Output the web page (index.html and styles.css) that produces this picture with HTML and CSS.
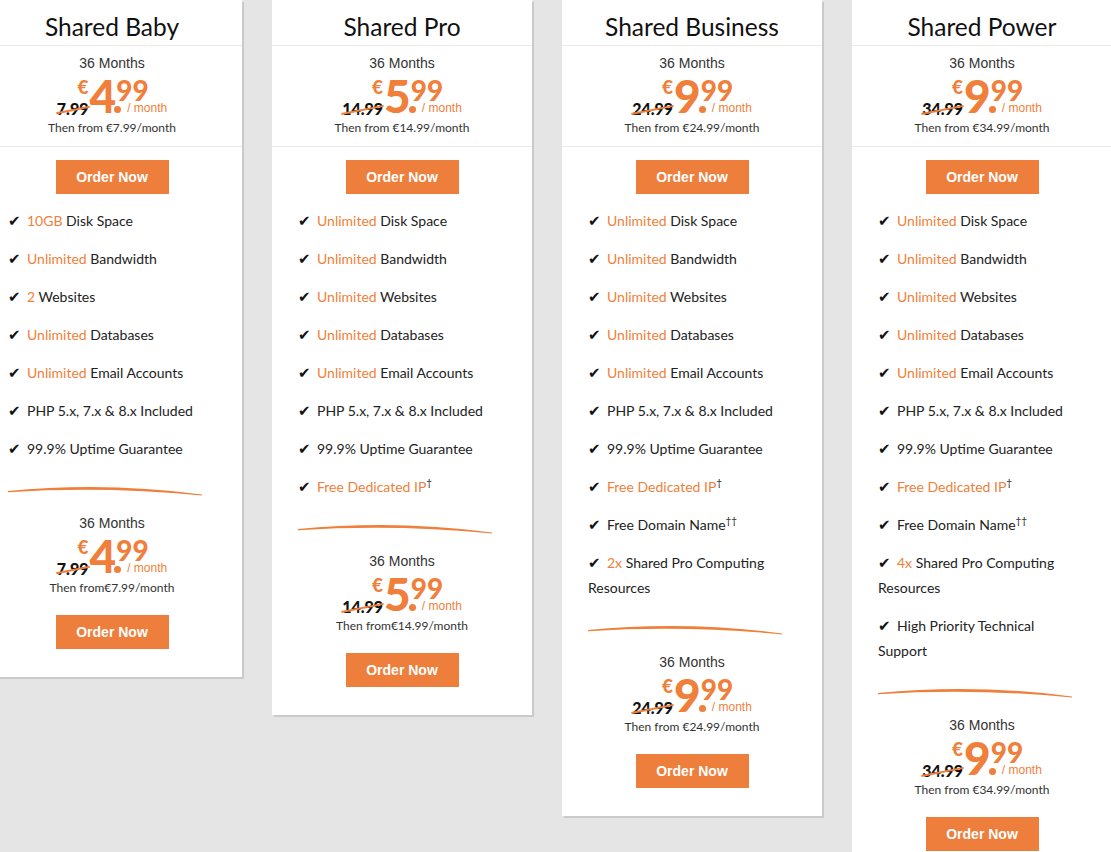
FILE: index.html
```html
<!DOCTYPE html>
<html lang="en">
<head>
    <meta charset="UTF-8">
    <meta name="viewport" content="width=device-width, initial-scale=1.0">
    <title>Shared Hosting Plans</title>
    <link rel="stylesheet" href="styles.css">
</head>
<body>
    <div class="plans">

        <div class="plan">
            <h2>Shared Baby</h2>
            <div class="price-box top">
                <div class="term">36 Months</div>
                <div class="price">
                    <div class="left"><span class="cur">€</span><span class="old">7.99</span></div>
                    <span class="int">4</span>
                    <div class="right"><span class="cents">99</span><div class="per"><span class="dot"></span>/ month</div></div>
                </div>
                <div class="then">Then from €7.99/month</div>
            </div>
            <a class="order" href="#">Order Now</a>
            <ul class="features">
                <li><span class="tick">✔</span><em>10GB</em> Disk Space</li>
                <li><span class="tick">✔</span><em>Unlimited</em> Bandwidth</li>
                <li><span class="tick">✔</span><em>2</em> Websites</li>
                <li><span class="tick">✔</span><em>Unlimited</em> Databases</li>
                <li><span class="tick">✔</span><em>Unlimited</em> Email Accounts</li>
                <li><span class="tick">✔</span>PHP 5.x, 7.x &amp; 8.x Included</li>
                <li><span class="tick">✔</span>99.9% Uptime Guarantee</li>
            </ul>
            <svg class="swoosh" viewBox="0 0 194 12" preserveAspectRatio="none"><path d="M0 5 Q97 -4.5 194 8.5 L194 9.5 Q97 0 0 6.2 Z"/></svg>
            <div class="price-box bottom">
                <div class="term">36 Months</div>
                <div class="price">
                    <div class="left"><span class="cur">€</span><span class="old">7.99</span></div>
                    <span class="int">4</span>
                    <div class="right"><span class="cents">99</span><div class="per"><span class="dot"></span>/ month</div></div>
                </div>
                <div class="then">Then from€7.99/month</div>
            </div>
            <a class="order" href="#">Order Now</a>
        </div>

        <div class="plan">
            <h2>Shared Pro</h2>
            <div class="price-box top">
                <div class="term">36 Months</div>
                <div class="price">
                    <div class="left"><span class="cur">€</span><span class="old">14.99</span></div>
                    <span class="int">5</span>
                    <div class="right"><span class="cents">99</span><div class="per"><span class="dot"></span>/ month</div></div>
                </div>
                <div class="then">Then from €14.99/month</div>
            </div>
            <a class="order" href="#">Order Now</a>
            <ul class="features">
                <li><span class="tick">✔</span><em>Unlimited</em> Disk Space</li>
                <li><span class="tick">✔</span><em>Unlimited</em> Bandwidth</li>
                <li><span class="tick">✔</span><em>Unlimited</em> Websites</li>
                <li><span class="tick">✔</span><em>Unlimited</em> Databases</li>
                <li><span class="tick">✔</span><em>Unlimited</em> Email Accounts</li>
                <li><span class="tick">✔</span>PHP 5.x, 7.x &amp; 8.x Included</li>
                <li><span class="tick">✔</span>99.9% Uptime Guarantee</li>
                <li><span class="tick">✔</span><em>Free Dedicated IP</em><sup>†</sup></li>
            </ul>
            <svg class="swoosh" viewBox="0 0 194 12" preserveAspectRatio="none"><path d="M0 5 Q97 -4.5 194 8.5 L194 9.5 Q97 0 0 6.2 Z"/></svg>
            <div class="price-box bottom">
                <div class="term">36 Months</div>
                <div class="price">
                    <div class="left"><span class="cur">€</span><span class="old">14.99</span></div>
                    <span class="int">5</span>
                    <div class="right"><span class="cents">99</span><div class="per"><span class="dot"></span>/ month</div></div>
                </div>
                <div class="then">Then from€14.99/month</div>
            </div>
            <a class="order" href="#">Order Now</a>
        </div>

        <div class="plan">
            <h2>Shared Business</h2>
            <div class="price-box top">
                <div class="term">36 Months</div>
                <div class="price">
                    <div class="left"><span class="cur">€</span><span class="old">24.99</span></div>
                    <span class="int">9</span>
                    <div class="right"><span class="cents">99</span><div class="per"><span class="dot"></span>/ month</div></div>
                </div>
                <div class="then">Then from €24.99/month</div>
            </div>
            <a class="order" href="#">Order Now</a>
            <ul class="features">
                <li><span class="tick">✔</span><em>Unlimited</em> Disk Space</li>
                <li><span class="tick">✔</span><em>Unlimited</em> Bandwidth</li>
                <li><span class="tick">✔</span><em>Unlimited</em> Websites</li>
                <li><span class="tick">✔</span><em>Unlimited</em> Databases</li>
                <li><span class="tick">✔</span><em>Unlimited</em> Email Accounts</li>
                <li><span class="tick">✔</span>PHP 5.x, 7.x &amp; 8.x Included</li>
                <li><span class="tick">✔</span>99.9% Uptime Guarantee</li>
                <li><span class="tick">✔</span><em>Free Dedicated IP</em><sup>†</sup></li>
                <li><span class="tick">✔</span>Free Domain Name<sup>††</sup></li>
                <li><span class="tick">✔</span><em>2x</em> Shared Pro Computing Resources</li>
            </ul>
            <svg class="swoosh" viewBox="0 0 194 12" preserveAspectRatio="none"><path d="M0 5 Q97 -4.5 194 8.5 L194 9.5 Q97 0 0 6.2 Z"/></svg>
            <div class="price-box bottom">
                <div class="term">36 Months</div>
                <div class="price">
                    <div class="left"><span class="cur">€</span><span class="old">24.99</span></div>
                    <span class="int">9</span>
                    <div class="right"><span class="cents">99</span><div class="per"><span class="dot"></span>/ month</div></div>
                </div>
                <div class="then">Then from €24.99/month</div>
            </div>
            <a class="order" href="#">Order Now</a>
        </div>

        <div class="plan">
            <h2>Shared Power</h2>
            <div class="price-box top">
                <div class="term">36 Months</div>
                <div class="price">
                    <div class="left"><span class="cur">€</span><span class="old">34.99</span></div>
                    <span class="int">9</span>
                    <div class="right"><span class="cents">99</span><div class="per"><span class="dot"></span>/ month</div></div>
                </div>
                <div class="then">Then from €34.99/month</div>
            </div>
            <a class="order" href="#">Order Now</a>
            <ul class="features">
                <li><span class="tick">✔</span><em>Unlimited</em> Disk Space</li>
                <li><span class="tick">✔</span><em>Unlimited</em> Bandwidth</li>
                <li><span class="tick">✔</span><em>Unlimited</em> Websites</li>
                <li><span class="tick">✔</span><em>Unlimited</em> Databases</li>
                <li><span class="tick">✔</span><em>Unlimited</em> Email Accounts</li>
                <li><span class="tick">✔</span>PHP 5.x, 7.x &amp; 8.x Included</li>
                <li><span class="tick">✔</span>99.9% Uptime Guarantee</li>
                <li><span class="tick">✔</span><em>Free Dedicated IP</em><sup>†</sup></li>
                <li><span class="tick">✔</span>Free Domain Name<sup>††</sup></li>
                <li><span class="tick">✔</span><em>4x</em> Shared Pro Computing Resources</li>
                <li><span class="tick">✔</span>High Priority Technical Support</li>
            </ul>
            <svg class="swoosh" viewBox="0 0 194 12" preserveAspectRatio="none"><path d="M0 5 Q97 -4.5 194 8.5 L194 9.5 Q97 0 0 6.2 Z"/></svg>
            <div class="price-box bottom">
                <div class="term">36 Months</div>
                <div class="price">
                    <div class="left"><span class="cur">€</span><span class="old">34.99</span></div>
                    <span class="int">9</span>
                    <div class="right"><span class="cents">99</span><div class="per"><span class="dot"></span>/ month</div></div>
                </div>
                <div class="then">Then from €34.99/month</div>
            </div>
            <a class="order" href="#">Order Now</a>
        </div>

    </div>
</body>
</html>
```

FILE: styles.css
```css
body {
    margin: 0;
    background: #e5e5e5;
    font-family: Lato, "Liberation Sans", sans-serif;
    color: #222;
    overflow: hidden;
}
.plans {
    display: flex;
    align-items: flex-start;
    gap: 30px;
    margin-left: -18px;
}
.plan {
    flex: 0 0 260px;
    background: #fff;
    box-shadow: 2px 2px 0 #cacaca;
    padding-bottom: 28px;
}
h2 {
    margin: 0;
    padding: 12px 0 3px;
    font-size: 24.5px;
    line-height: 30px;
    font-weight: 400;
    color: #111;
    text-align: center;
    border-bottom: 1px solid #ececec;
}
.price-box {
    text-align: center;
}
.price-box.top {
    padding: 9px 0 10px;
    border-bottom: 1px solid #ececec;
}
.price-box.bottom {
    padding-top: 17px;
}
.term {
    font-family: "Liberation Sans", Arial, sans-serif;
    font-size: 14px;
    line-height: 17px;
    color: #333;
}
.price {
    display: flex;
    justify-content: center;
    height: 35px;
    margin-top: 8px;
    color: #ef7f3a;
}
.left {
    display: flex;
    flex-direction: column;
    align-items: flex-end;
    justify-content: space-between;
}
.cur {
    font-size: 19px;
    font-weight: 900;
    line-height: 14px;
    margin-right: 1px;
}
.old {
    position: relative;
    font-size: 16px;
    font-weight: 900;
    line-height: 12px;
    color: #111;
    margin-right: 1px;
}
.old::after {
    content: "";
    position: absolute;
    left: -1px;
    right: -1px;
    top: 6px;
    height: 2px;
    background: #ef7f3a;
    transform: rotate(-11deg);
}
.int {
    font-size: 46px;
    font-weight: 900;
    line-height: 32px;
}
.right {
    display: flex;
    flex-direction: column;
    align-items: flex-start;
}
.cents {
    font-size: 28px;
    font-weight: 900;
    line-height: 20px;
}
.per {
    display: flex;
    align-items: flex-end;
    height: 15px;
    font-family: "Liberation Sans", Arial, sans-serif;
    font-size: 12px;
    line-height: 14px;
}
.dot {
    width: 7px;
    height: 7px;
    border-radius: 50%;
    background: #ef7f3a;
    margin: 0 6px 2px -2px;
}
.then {
    margin-top: 5px;
    font-size: 12px;
    line-height: 16px;
    color: #333;
}
.order {
    display: block;
    width: 113px;
    height: 34px;
    margin: 13px auto 0;
    background: #ee7e3b;
    color: #fff;
    font-family: "Liberation Sans", Arial, sans-serif;
    font-size: 14px;
    font-weight: 700;
    line-height: 34px;
    text-align: center;
    text-decoration: none;
}
.price-box.bottom + .order {
    margin-top: 19px;
}
.features {
    list-style: none;
    margin: 14px 0 0;
    padding: 0 38px 0 26px;
}
.features li {
    font-size: 14px;
    line-height: 25px;
    margin-bottom: 13px;
}
.features em {
    font-style: normal;
    color: #ef7f3a;
}
.features sup {
    font-size: 10px;
    line-height: 0;
    color: #222;
}
.tick {
    display: inline-block;
    width: 13px;
    margin-right: 6px;
    font-family: "DejaVu Sans", sans-serif;
    font-size: 15px;
    line-height: 1;
    color: #111;
}
.swoosh {
    display: block;
    width: 194px;
    height: 12px;
    margin: 25px 0 0 26px;
    fill: #ef7f3a;
}
```
